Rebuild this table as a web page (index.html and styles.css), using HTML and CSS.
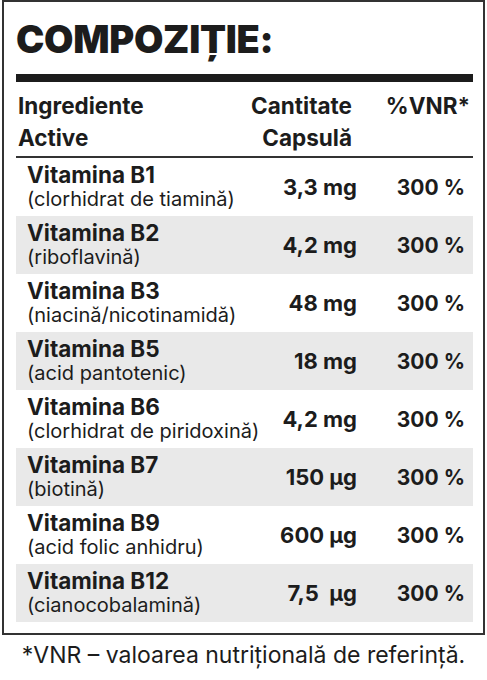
FILE: index.html
```html
<!DOCTYPE html>
<html lang="ro">

<head>
    <meta charset="UTF-8">
    <meta name="viewport" content="width=device-width, initial-scale=1.0">
    <title>Compoziție</title>
    <link rel="stylesheet" href="styles.css">
</head>

<body>
    <main class="label">
        <h1 class="title">COMPOZIȚIE:</h1>
        <div class="head-row">
            <div class="head-name">Ingrediente<br>Active</div>
            <div class="head-amount">Cantitate<br>Capsulă</div>
            <div class="head-vnr">%VNR*</div>
        </div>
        <div class="rows">
            <div class="row">
                <div class="name"><b>Vitamina B1</b><span>(clorhidrat de tiamină)</span></div>
                <div class="amount">3,3 mg</div>
                <div class="vnr">300 %</div>
            </div>
            <div class="row shaded">
                <div class="name"><b>Vitamina B2</b><span>(riboflavină)</span></div>
                <div class="amount">4,2 mg</div>
                <div class="vnr">300 %</div>
            </div>
            <div class="row">
                <div class="name"><b>Vitamina B3</b><span>(niacină/nicotinamidă)</span></div>
                <div class="amount">48 mg</div>
                <div class="vnr">300 %</div>
            </div>
            <div class="row shaded">
                <div class="name"><b>Vitamina B5</b><span>(acid pantotenic)</span></div>
                <div class="amount">18 mg</div>
                <div class="vnr">300 %</div>
            </div>
            <div class="row">
                <div class="name"><b>Vitamina B6</b><span>(clorhidrat de piridoxină)</span></div>
                <div class="amount">4,2 mg</div>
                <div class="vnr">300 %</div>
            </div>
            <div class="row shaded">
                <div class="name"><b>Vitamina B7</b><span>(biotină)</span></div>
                <div class="amount">150 µg</div>
                <div class="vnr">300 %</div>
            </div>
            <div class="row">
                <div class="name"><b>Vitamina B9</b><span>(acid folic anhidru)</span></div>
                <div class="amount">600 µg</div>
                <div class="vnr">300 %</div>
            </div>
            <div class="row shaded">
                <div class="name"><b>Vitamina B12</b><span>(cianocobalamină)</span></div>
                <div class="amount">7,5&nbsp; µg</div>
                <div class="vnr">300 %</div>
            </div>
        </div>
    </main>
    <p class="note">*VNR – valoarea nutrițională de referință.</p>
</body>

</html>
```

FILE: styles.css
```css
* {
    margin: 0;
    padding: 0;
    box-sizing: border-box;
}

body {
    font-family: Inter, "Noto Sans", sans-serif;
    color: #1c1c1c;
    background-color: #fff;
    padding: 0 2px;
}

.label {
    border: 2px solid #333;
    padding: 14px 10px 11px 12px;
}

.title {
    font-size: 38px;
    font-weight: 900;
    line-height: 46px;
    letter-spacing: -0.3px;
    margin-bottom: 12px;
}

/* header row */
.head-row {
    display: grid;
    grid-template-columns: minmax(0, 1fr) 120px 108px;
    border-top: 8px solid #1c1c1c;
    border-bottom: 2px solid #333;
    padding: 8px 3px 2px 2px;
    font-size: 22.5px;
    font-weight: 700;
    line-height: 32px;
}

.head-amount {
    text-align: right;
    padding-right: 10px;
}

.head-vnr {
    text-align: right;
}

/* vitamin rows */
.row {
    display: grid;
    grid-template-columns: minmax(0, 1fr) 120px 108px;
    align-items: center;
    height: 58px;
    padding: 0 8px 0 11px;
}

.row.shaded {
    background-color: #e9e9e9;
}

.name {
    white-space: nowrap;
}

.name b {
    display: block;
    font-size: 22.5px;
    font-weight: 700;
    line-height: 25px;
}

.name span {
    display: block;
    font-size: 20px;
    line-height: 25px;
}

.amount,
.vnr {
    text-align: right;
    font-size: 21px;
    font-weight: 700;
}

.amount {
    font-size: 22px;
}

.note {
    text-align: center;
    font-size: 23px;
    line-height: 28px;
    padding-top: 6px;
}
```
